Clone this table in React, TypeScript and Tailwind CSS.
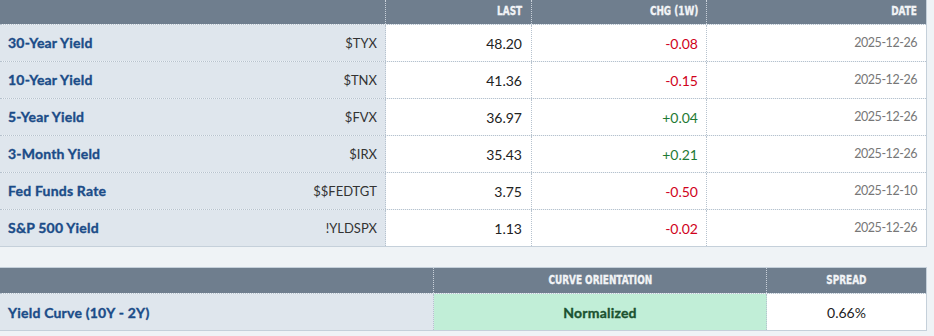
import React from "react";

const rows = [
  { name: "30-Year Yield", sym: "$TYX", last: "48.20", chg: "-0.08", date: "2025-12-26" },
  { name: "10-Year Yield", sym: "$TNX", last: "41.36", chg: "-0.15", date: "2025-12-26" },
  { name: "5-Year Yield", sym: "$FVX", last: "36.97", chg: "+0.04", date: "2025-12-26" },
  { name: "3-Month Yield", sym: "$IRX", last: "35.43", chg: "+0.21", date: "2025-12-26" },
  { name: "Fed Funds Rate", sym: "$$FEDTGT", last: "3.75", chg: "-0.50", date: "2025-12-10" },
  { name: "S&P 500 Yield", sym: "!YLDSPX", last: "1.13", chg: "-0.02", date: "2025-12-26" },
];

const hdrFont = {
  fontFamily: '"Liberation Sans Narrow", "DejaVu Sans Condensed", "Roboto", sans-serif',
};

function H({ children }: { children: React.ReactNode }) {
  return (
    <span
      className="inline-block scale-x-[0.86] [-webkit-text-stroke:0.3px_#f4f6f8]"
      style={hdrFont}
    >
      {children}
    </span>
  );
}

function HR({ children }: { children: React.ReactNode }) {
  return (
    <span
      className="inline-block scale-x-[0.86] origin-right [-webkit-text-stroke:0.3px_#f4f6f8]"
      style={hdrFont}
    >
      {children}
    </span>
  );
}

export default function App() {
  return (
    <div
      className="w-[934px] h-[336px] bg-[#eff3f6] overflow-hidden"
      style={{ fontFamily: 'Lato, "Liberation Sans", sans-serif' }}
    >
      <div className="w-[927px] border-r border-b border-[#c5d0da]">
        <div className="grid grid-cols-[386px_146px_175px_219px] h-[24px] bg-[#6f7e8e] text-[#f1f3f6] text-[11.5px] font-bold uppercase">
          <div className="border-r border-dotted border-[#c9d1da]" />
          <div className="flex items-center justify-end pr-[9px] border-r border-dotted border-[#c9d1da]">
            <HR>Last</HR>
          </div>
          <div className="flex items-center justify-end pr-[8px] border-r border-dotted border-[#c9d1da]">
            <HR>Chg (1W)</HR>
          </div>
          <div className="flex items-center justify-end pr-[9px]">
            <HR>Date</HR>
          </div>
        </div>
        {rows.map((r) => (
          <div
            key={r.name}
            className="grid grid-cols-[386px_146px_175px_219px] h-[37px] border-t border-dotted border-[#b6c2ce]"
          >
            <div className="flex items-center px-[8px] bg-[#dfe6ed] border-r border-dotted border-[#b6c2ce]">
              <div className="flex w-full items-baseline justify-between">
                <span className="text-[14px] leading-[20px] font-bold tracking-[0.2px] text-[#1b4c88] [-webkit-text-stroke:0.35px_#1b4c88]">
                  {r.name}
                </span>
                <span className="text-[13px] leading-[20px] text-[#333333]">{r.sym}</span>
              </div>
            </div>
            <div className="flex items-center justify-end pr-[9px] bg-white border-r border-dotted border-[#b6c2ce] text-[14px] text-[#222222]">
              {r.last}
            </div>
            <div
              className={
                "flex items-center justify-end pr-[8px] bg-white border-r border-dotted border-[#b6c2ce] text-[14px] " +
                (r.chg.startsWith("+") ? "text-[#1e7a34]" : "text-[#d0021b]")
              }
            >
              {r.chg}
            </div>
            <div className="flex items-center justify-end pr-[9px] bg-white text-[12.5px] tracking-[-0.45px] text-[#777777]">
              {r.date}
            </div>
          </div>
        ))}
      </div>

      <div className="h-[20px]" />

      <div className="w-[927px] border-t border-r border-b border-[#c5d0da]">
        <div className="grid grid-cols-[434px_333px_159px] h-[25px] bg-[#6f7e8e] text-[#f1f3f6] text-[11.5px] font-bold uppercase">
          <div className="border-r border-dotted border-[#c9d1da]" />
          <div className="flex items-center justify-center border-r border-dotted border-[#c9d1da]">
            <H>Curve Orientation</H>
          </div>
          <div className="flex items-center justify-center">
            <H>Spread</H>
          </div>
        </div>
        <div className="grid grid-cols-[434px_333px_159px] h-[37px] border-t border-dotted border-[#b6c2ce]">
          <div className="flex items-center px-[8px] bg-[#dfe6ed] border-r border-dotted border-[#b6c2ce]">
            <span className="text-[14px] font-bold tracking-[0.2px] text-[#1b4c88] [-webkit-text-stroke:0.35px_#1b4c88]">
              Yield Curve (10Y - 2Y)
            </span>
          </div>
          <div className="flex items-center justify-center bg-[#c1eed7] border-r border-dotted border-[#b6c2ce] text-[14px] font-bold tracking-[0.2px] text-[#1b5230] [-webkit-text-stroke:0.35px_#1b5230]">
            Normalized
          </div>
          <div className="flex items-center justify-center bg-white text-[14px] text-[#222222]">
            0.66%
          </div>
        </div>
      </div>
    </div>
  );
}
